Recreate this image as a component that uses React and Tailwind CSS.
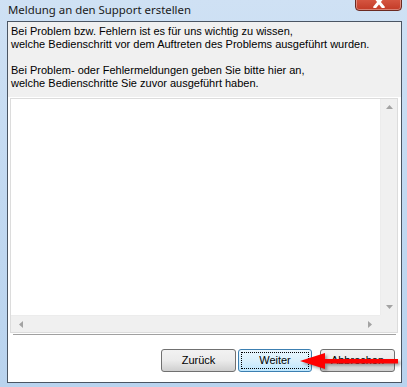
import React from 'react';

const ui = { fontFamily: '"Liberation Sans", Arial, sans-serif' };
const title = { fontFamily: '"Noto Sans", "Open Sans", sans-serif' };

function Triangle({ dir }) {
  const pts = {
    up: '0,4 3.5,0 7,4',
    down: '0,0 3.5,4 7,0',
    left: '4,0 0,3.5 4,7',
    right: '0,0 4,3.5 0,7',
  }[dir];
  const vertical = dir === 'up' || dir === 'down';
  return (
    <svg width={vertical ? 7 : 4} height={vertical ? 4 : 7} viewBox={vertical ? '0 0 7 4' : '0 0 4 7'}>
      <polygon points={pts} fill="#a3a3a3" />
    </svg>
  );
}

function Button({ children, primary }) {
  return (
    <button
      type="button"
      className={
        primary
          ? 'w-[74px] h-[23px] rounded-[3px] border border-[#3c7fb1] bg-gradient-to-b from-[#eaf6fd] via-[#d9f0fc] to-[#bee6fd] p-[2px] text-[11px] text-black'
          : 'w-[75px] h-[23px] rounded-[3px] border border-[#707070] bg-gradient-to-b from-[#f2f2f2] via-[#ebebeb] to-[#cfcfcf] text-[11px] text-black'
      }
      style={ui}
    >
      {primary ? (
        <span className="flex h-full w-full items-center justify-center border border-dotted border-black">{children}</span>
      ) : (
        children
      )}
    </button>
  );
}

export default function App() {
  return (
    <div className="relative flex h-[387px] w-[407px] flex-col overflow-hidden bg-gradient-to-b from-[#cfe1f4] via-[#c2d9f1] to-[#b9d3ee]">
      <div className="flex h-[21px] shrink-0 items-center pl-[8px] pb-[1px]">
        <span className="text-[11.4px] leading-none text-[#1a1a1a]" style={title}>
          Meldung an den Support erstellen
        </span>
      </div>

      {/* close button, cut off by the top edge */}
      <div className="absolute left-[355px] top-[-10px] flex h-[21px] w-[47px] items-end justify-center rounded-[4px] border border-[#6b2a22] bg-gradient-to-b from-[#e9a08f] via-[#d4533f] to-[#c23a26] pb-[2px] shadow-[inset_0_0_0_1px_rgba(255,255,255,0.35)]">
        <svg width="12" height="12" viewBox="0 0 12 12">
          <path d="M2 1 L10 11 M10 1 L2 11" stroke="#ffffff" strokeWidth="3" strokeLinecap="square" />
        </svg>
      </div>

      <div className="ml-[7px] flex h-[362px] w-[395px] flex-col border border-[#4a5563] bg-white">
        <div className="h-[75px] shrink-0 bg-[#f0f0f0] pl-[3px] pt-[3px] text-[11px] leading-[13px] text-black" style={ui}>
          <p>Bei Problem bzw. Fehlern ist es für uns wichtig zu wissen,</p>
          <p>welche Bedienschritt vor dem Auftreten des Problems ausgeführt wurden.</p>
          <p>&nbsp;</p>
          <p>Bei Problem- oder Fehlermeldungen geben Sie bitte hier an,</p>
          <p>welche Bedienschritte Sie zuvor ausgeführt haben.</p>
        </div>

        <div className="ml-[2px] mt-[1px] flex h-[235px] w-[388px] flex-col border border-[#dcdcdc] bg-white">
          <div className="flex min-h-0 flex-1">
            <div className="flex-1" />
            <div className="flex w-[17px] flex-col items-center justify-between border-l border-[#ececec] bg-[#f0f0f0] py-[6px]">
              <Triangle dir="up" />
              <Triangle dir="down" />
            </div>
          </div>
          <div className="flex h-[17px] shrink-0">
            <div className="flex flex-1 items-center justify-between border-t border-[#ececec] bg-[#f0f0f0] px-[8px]">
              <Triangle dir="left" />
              <Triangle dir="right" />
            </div>
            <div className="w-[17px] bg-[#f0f0f0]" />
          </div>
        </div>

        <div className="ml-[5px] mt-[1px] h-[2px] w-[383px] border-t border-b border-t-[#a0a0a0] border-b-white" />

        <div className="mt-[13px] flex justify-end pr-[6px]">
          <Button>Zurück</Button>
          <div className="w-[2px]" />
          <Button primary>Weiter</Button>
          <div className="w-[8px]" />
          <Button>Abbrechen</Button>
        </div>
      </div>

      {/* red annotation arrow */}
      <svg className="absolute left-[296px] top-[350px]" width="111" height="24" viewBox="0 0 111 24">
        <defs>
          <filter id="sh" x="-10%" y="-50%" width="120%" height="200%">
            <feGaussianBlur stdDeviation="1.5" />
          </filter>
        </defs>
        <g transform="translate(2,2)" opacity="0.45" filter="url(#sh)">
          <polygon points="4,11 29,3 29,9 102,9 102,13.5 29,13.5 29,19" fill="#333" />
        </g>
        <polygon points="4,11 29,3 29,9 102,9 102,13.5 29,13.5 29,19" fill="#ff0000" />
      </svg>
    </div>
  );
}
